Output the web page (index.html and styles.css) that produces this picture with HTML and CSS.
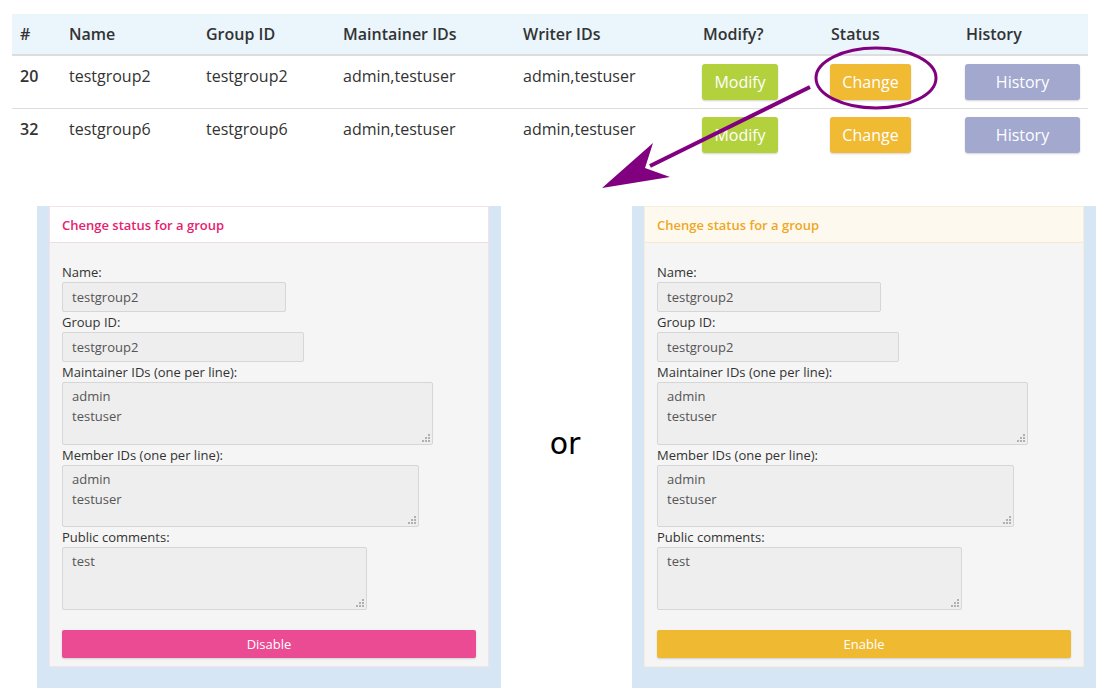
FILE: index.html
```html
<!DOCTYPE html>
<html>
<head>
<meta charset="utf-8">
<link rel="stylesheet" href="styles.css">
</head>
<body>
<div class="page">
  <div class="table-wrap">
    <table class="groups">
      <thead>
        <tr>
          <th class="c-num">#</th>
          <th class="c-name">Name</th>
          <th class="c-gid">Group ID</th>
          <th class="c-maint">Maintainer IDs</th>
          <th class="c-writer">Writer IDs</th>
          <th class="c-mod">Modify?</th>
          <th class="c-status">Status</th>
          <th class="c-hist">History</th>
        </tr>
      </thead>
      <tbody>
        <tr>
          <td class="num">20</td>
          <td>testgroup2</td>
          <td>testgroup2</td>
          <td>admin,testuser</td>
          <td>admin,testuser</td>
          <td><span class="btn btn-modify">Modify</span></td>
          <td><span class="btn btn-change">Change</span></td>
          <td><span class="btn btn-history">History</span></td>
        </tr>
        <tr>
          <td class="num">32</td>
          <td>testgroup6</td>
          <td>testgroup6</td>
          <td>admin,testuser</td>
          <td>admin,testuser</td>
          <td><span class="btn btn-modify">Modify</span></td>
          <td><span class="btn btn-change">Change</span></td>
          <td><span class="btn btn-history">History</span></td>
        </tr>
      </tbody>
    </table>
  </div>

  <div class="panels">
    <div class="panel">
      <div class="card card-pink">
        <div class="card-head">Chenge status for a group</div>
        <div class="card-body">
          <label class="lbl">Name:</label>
          <div class="field w-name">testgroup2</div>
          <label class="lbl">Group ID:</label>
          <div class="field w-gid">testgroup2</div>
          <label class="lbl">Maintainer IDs (one per line):</label>
          <div class="area w-maint h63">admin<br>testuser<span class="grip"></span></div>
          <label class="lbl">Member IDs (one per line):</label>
          <div class="area w-member h62">admin<br>testuser<span class="grip"></span></div>
          <label class="lbl">Public comments:</label>
          <div class="area w-public h63">test<span class="grip"></span></div>
          <div class="action action-pink">Disable</div>
        </div>
      </div>
    </div>

    <div class="or">or</div>

    <div class="panel">
      <div class="card card-yellow">
        <div class="card-head">Chenge status for a group</div>
        <div class="card-body">
          <label class="lbl">Name:</label>
          <div class="field w-name">testgroup2</div>
          <label class="lbl">Group ID:</label>
          <div class="field w-gid">testgroup2</div>
          <label class="lbl">Maintainer IDs (one per line):</label>
          <div class="area w-maint h63">admin<br>testuser<span class="grip"></span></div>
          <label class="lbl">Member IDs (one per line):</label>
          <div class="area w-member h62">admin<br>testuser<span class="grip"></span></div>
          <label class="lbl">Public comments:</label>
          <div class="area w-public h63">test<span class="grip"></span></div>
          <div class="action action-yellow">Enable</div>
        </div>
      </div>
    </div>
  </div>

  <svg class="annot" width="1101" height="688" viewBox="0 0 1101 688">
    <ellipse cx="876" cy="78" rx="60" ry="30" fill="none" stroke="#800080" stroke-width="3"/>
    <line x1="810" y1="87" x2="650" y2="166" stroke="#800080" stroke-width="4"/>
    <polygon points="602,188 653,143 645,168 670,177" fill="#800080"/>
  </svg>
</div>
</body>
</html>
```

FILE: styles.css
```css
html, body {
  margin: 0;
  padding: 0;
  background: #ffffff;
}

body {
  font-family: "Open Sans", "DejaVu Sans", sans-serif;
  color: #333333;
  width: 1101px;
  height: 688px;
  overflow: hidden;
}

.page {
  position: relative;
  width: 1101px;
  height: 688px;
}

.table-wrap {
  padding: 14px 0 0 12px;
}

.groups {
  border-collapse: collapse;
  width: 1076px;
  table-layout: fixed;
  font-size: 16px;
}

.groups th {
  background: #eaf5fc;
  font-weight: 600;
  text-align: left;
  padding: 8px;
  line-height: 24px;
  border-bottom: 2px solid #dddddd;
  vertical-align: bottom;
}

.groups td {
  padding: 8px;
  line-height: 24px;
  vertical-align: top;
  border-top: 1px solid #dddddd;
  height: 36px;
}

.groups td.num {
  font-weight: 600;
}

.c-num { width: 33px; }
.c-name { width: 121px; }
.c-gid { width: 121px; }
.c-maint { width: 164px; }
.c-writer { width: 164px; }
.c-mod { width: 112px; }
.c-status { width: 119px; }
.c-hist { width: 114px; }

.btn {
  display: inline-block;
  box-sizing: border-box;
  height: 36px;
  line-height: 36px;
  text-align: center;
  color: #ffffff;
  border-radius: 3px;
  box-shadow: 0 1px 2px rgba(0, 0, 0, 0.18);
  margin-left: -1px;
}

.btn-modify { width: 76px; background: #b3d13c; }
.btn-change { width: 81px; background: #f0ba32; }
.btn-history { width: 115px; background: #a3a8cf; }

.panels {
  display: flex;
  margin-top: 45px;
  padding-left: 37px;
}

.panel {
  width: 440px;
  padding: 0 12px 40px 12px;
  background: #d6e6f4;
}

.or {
  width: 131px;
  text-align: center;
  font-family: "DejaVu Sans", sans-serif;
  font-size: 30px;
  line-height: 36px;
  color: #000000;
  padding-top: 220px;
  padding-right: 3px;
  box-sizing: border-box;
}

.card {
  box-sizing: border-box;
  width: 440px;
  background: #f5f5f5;
  border: 1px solid #f3e2ea;
}

.card-head {
  height: 35px;
  line-height: 36px;
  padding-left: 12px;
  font-size: 13px;
  font-weight: 600;
  background: #ffffff;
  border-bottom: 1px solid #f1dbe5;
}

.card-pink .card-head {
  color: #e6216f;
}

.card-yellow {
  border-color: #f6eddb;
}

.card-yellow .card-head {
  color: #efa71f;
  background: #fef9ee;
  border-bottom-color: #f3e9d3;
}

.card-body {
  padding: 20px 12px 8px 12px;
  font-size: 13px;
}

.lbl {
  display: block;
  line-height: 18px;
  margin-bottom: 1px;
  color: #333333;
}

.field {
  box-sizing: border-box;
  height: 30px;
  line-height: 28px;
  padding: 0 9px;
  background: #eeeeee;
  border: 1px solid #d6d6d6;
  border-radius: 2px;
  color: #555555;
  margin-bottom: 1px;
}

.area {
  position: relative;
  box-sizing: border-box;
  padding: 3px 9px;
  line-height: 20px;
  background: #eeeeee;
  border: 1px solid #d6d6d6;
  border-radius: 2px;
  color: #555555;
  margin-bottom: 1px;
}

.grip {
  position: absolute;
  right: 2px;
  bottom: 2px;
  width: 8px;
  height: 8px;
  background:
    radial-gradient(circle, #b0b0b0 0.8px, transparent 1px) 6px 0 / 2px 2px no-repeat,
    radial-gradient(circle, #b0b0b0 0.8px, transparent 1px) 3px 3px / 2px 2px no-repeat,
    radial-gradient(circle, #b0b0b0 0.8px, transparent 1px) 6px 3px / 2px 2px no-repeat,
    radial-gradient(circle, #b0b0b0 0.8px, transparent 1px) 0 6px / 2px 2px no-repeat,
    radial-gradient(circle, #b0b0b0 0.8px, transparent 1px) 3px 6px / 2px 2px no-repeat,
    radial-gradient(circle, #b0b0b0 0.8px, transparent 1px) 6px 6px / 2px 2px no-repeat;
}

.w-name { width: 224px; }
.w-gid { width: 242px; }
.w-maint { width: 371px; }
.w-member { width: 357px; }
.w-public { width: 305px; }
.h62 { height: 62px; }
.h63 { height: 63px; }

.action {
  margin-top: 20px;
  height: 28px;
  line-height: 28px;
  text-align: center;
  color: #ffffff;
  border-radius: 2px;
  box-shadow: 0 1px 2px rgba(0, 0, 0, 0.15);
}

.action-pink { background: #ea4b93; }
.action-yellow { background: #f0b932; }

.annot {
  position: absolute;
  left: 0;
  top: 0;
  pointer-events: none;
}
```
